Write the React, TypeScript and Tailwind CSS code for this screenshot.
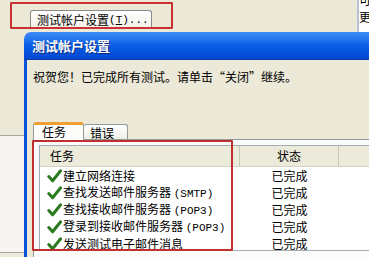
import React from "react";

const font = { fontFamily: "'Noto Sans CJK SC', 'DejaVu Sans', sans-serif" };

function Check() {
  return (
    <svg width="15" height="14" viewBox="0 0 15 14" className="shrink-0">
      <path d="M1.8 7.5 L5.6 11.8 L13.6 1.8" fill="none" stroke="#2c7a1f" strokeWidth="3" strokeLinecap="round" strokeLinejoin="round" />
    </svg>
  );
}

function Latin({ children }: { children: React.ReactNode }) {
  return <span className="text-[11px] font-['Liberation_Mono',monospace]">{children}</span>;
}

const rows: { label: React.ReactNode }[] = [
  { label: "建立网络连接" },
  { label: <>查找发送邮件服务器 <Latin>(SMTP)</Latin></> },
  { label: <>查找接收邮件服务器 <Latin>(POP3)</Latin></> },
  { label: <>登录到接收邮件服务器 <Latin>(POP3)</Latin></> },
  { label: "发送测试电子邮件消息" },
];

export default function App() {
  return (
    <div className="relative w-[369px] h-[257px] overflow-hidden bg-[#ece9d8] text-[12px] text-black" style={font}>
      {/* background window */}
      <div className="flex flex-col h-full">
        <div className="flex h-[32px]">
          <div className="w-[30px]" />
          <div className="mt-[10px] h-[19px] w-[122px] rounded-t-[3px] border border-b-0 border-[#8a8a8a] bg-gradient-to-b from-white to-[#f1efe6] flex items-center pl-[6px] leading-none">
            测试帐户设置<Latin>(<span className="underline">T</span>)...</Latin>
          </div>
          <div className="flex-1" />
          <div className="w-[12px] border-l-2 border-[#b8c2d6] bg-white flex flex-col leading-none overflow-hidden">
            <span className="-mt-[6px] text-[12px]">可</span>
            <span className="mt-[5px] text-[12px]">更</span>
          </div>
        </div>
        <div className="h-[103px]" />
        <div className="h-[118px] w-[24px] border-y border-[#a8a8a0] bg-[#f6f5f1]" />
      </div>

      {/* dialog */}
      <div className="absolute left-[24px] top-[32px] w-[360px] h-[240px] flex flex-col">
        <div className="h-[28px] rounded-t-[7px] bg-gradient-to-b from-[#3d8df7] via-[#0a5fe8] to-[#0448d2] border-b border-[#0a3cae] flex items-center pl-[8px]">
          <span className="text-white font-bold text-[13px] [text-shadow:1px_1px_0_#0a2a80]">测试帐户设置</span>
        </div>
        <div className="flex-1 border-x-[3px] border-[#0a52dc] bg-[#ece9d8] pl-[6px] pt-[10px] flex flex-col">
          <div className="h-[14px] leading-[14px]">祝贺您！已完成所有测试。请单击“关闭”继续。</div>
          <div className="mt-[38px] flex items-end h-[17px] leading-none">
            <div className="relative z-10 h-[18px] w-[51px] border border-b-0 border-[#919b9c] border-t-[3px] border-t-[#f0a030] rounded-t-[3px] bg-[#fcfcfb] pl-[8px] pt-[1px] -mb-px">任务</div>
            <div className="h-[15px] w-[44px] border border-l-0 border-b-0 border-[#919b9c] rounded-t-[3px] bg-gradient-to-b from-white to-[#eeede5] pl-[6px] pt-[2px]">错误</div>
          </div>
          <div className="flex-1 border border-[#919b9c] bg-[#fbfbf9] pl-[5px] pt-[5px]">
            <div className="h-[106px] border border-r-0 border-[#a5acb5] bg-white overflow-hidden">
              <div className="flex h-[21px] bg-[#ebeadb] border-b border-[#d6d2c2] items-center leading-none">
                <div className="w-[200px] h-full flex items-center pl-[10px] border-r border-[#cbc7b8]">任务</div>
                <div className="w-[99px] h-full flex items-center justify-center border-r border-[#cbc7b8]">状态</div>
                <div className="flex-1" />
              </div>
              {rows.map((r, i) => (
                <div key={i} className="flex h-[17px] items-center leading-none">
                  <div className="w-[200px] flex items-center pl-[7px] gap-[1px] whitespace-nowrap">
                    <Check />
                    <span>{r.label}</span>
                  </div>
                  <div className="w-[99px] text-center">已完成</div>
                </div>
              ))}
            </div>
          </div>
        </div>
      </div>

      {/* annotation frames */}
      <div className="absolute left-[10px] top-[2px] w-[163px] h-[27px] border-2 border-[#c83232] rounded-[1px]" />
      <div className="absolute left-[32px] top-[140px] w-[201px] h-[111px] border-[2px] border-[#c03030] rounded-[1px]" />
    </div>
  );
}
